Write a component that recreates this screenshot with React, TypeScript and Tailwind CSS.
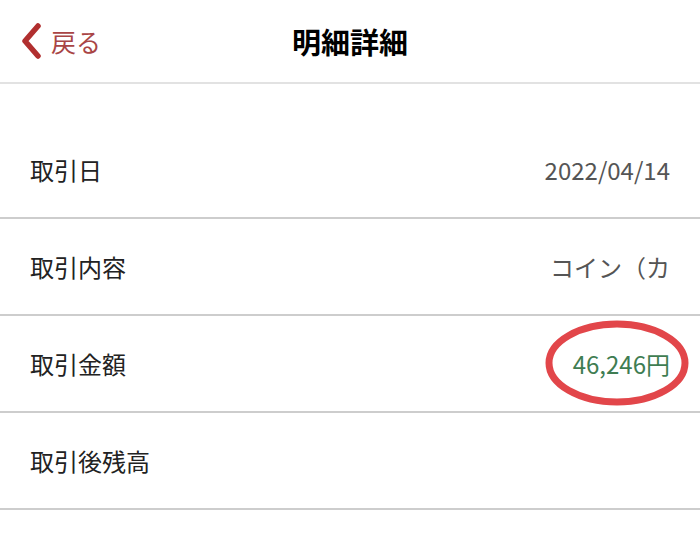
const ROWS = [
  { label: '取引日', value: '2022/04/14' },
  { label: '取引内容', value: 'コイン（カ' },
  { label: '取引金額', value: '46,246円', amount: true },
  { label: '取引後残高', value: '' },
]

export default function App() {
  return (
    <div className="w-[700px] h-[538px] bg-white overflow-hidden font-['Noto_Sans_CJK_JP',sans-serif] text-[#222]">
      {/* Header */}
      <div className="relative h-[84px] flex items-center justify-center border-b-2 border-[#e2e2e2]">
        <div className="absolute left-[20px] top-0 h-full flex items-center gap-[9px]">
          <svg width="22" height="36" viewBox="0 0 22 36" fill="none">
            <path d="M18 3 L5 18 L18 33" stroke="#b12f2f" strokeWidth="5.5" strokeLinecap="round" strokeLinejoin="round" />
          </svg>
          <span className="text-[25px] text-[#a94545] leading-none">戻る</span>
        </div>
        <h1 className="text-[29px] font-bold leading-none text-black">明細詳細</h1>
      </div>

      <div className="h-[38px]" />

      {ROWS.map((row) => (
        <div
          key={row.label}
          className="relative h-[97px] flex items-center justify-between px-[30px] border-b-2 border-[#cdcdcd]"
        >
          <span className="text-[24px] leading-none">{row.label}</span>
          {row.value && (
            <span className={`text-[24px] leading-none ${row.amount ? 'text-[#3f7d52]' : 'text-[#555]'}`}>
              {row.value}
            </span>
          )}
          {row.amount && (
            <svg className="absolute right-[10px] top-[4px]" width="146" height="86" viewBox="0 0 146 86" fill="none">
              <ellipse cx="73" cy="43" rx="68" ry="39" stroke="#e2464a" strokeWidth="7" />
            </svg>
          )}
        </div>
      ))}
    </div>
  )
}
